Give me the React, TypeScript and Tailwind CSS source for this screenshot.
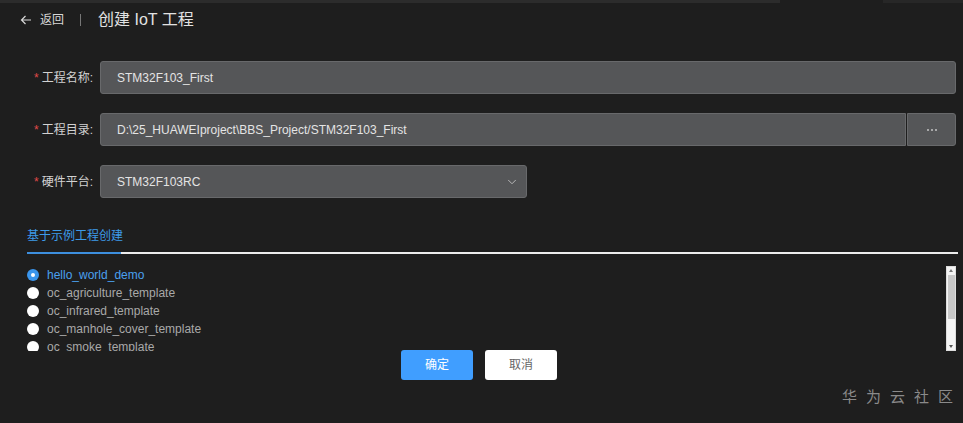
import { ChevronDown } from 'lucide-react'

const TEMPLATES = [
  'hello_world_demo',
  'oc_agriculture_template',
  'oc_infrared_template',
  'oc_manhole_cover_template',
  'oc_smoke_template',
]

const font = { fontFamily: '"Liberation Sans", "Noto Sans CJK SC", sans-serif' }

export default function App() {
  const selected = 'hello_world_demo'

  return (
    <div className="w-[963px] h-[423px] bg-[#1e1e1e] relative overflow-hidden text-[#d6d6d6]" style={font}>
      {/* top tab strip */}
      <div className="flex h-[3px]">
        <div className="w-[780px] bg-[#2c2c2c]" />
        <div className="flex-1" />
        <div className="w-[80px] bg-[#272727]" />
      </div>

      {/* header */}
      <div className="flex items-center h-[34px] pl-5">
        <button className="flex items-center gap-[8px] text-[12px] text-[#d8d8d8]">
          <svg width="12" height="12" viewBox="0 0 12 12" fill="none" stroke="currentColor" strokeWidth="1.2">
            <path d="M11 6H1.5M5.5 2L1.5 6l4 4" />
          </svg>
          返回
        </button>
        <div className="w-px h-[12px] bg-[#777] ml-[16px] mr-[17px]" />
        <h1 className="text-[16px] text-[#e2e2e2]">创建 IoT 工程</h1>
      </div>

      {/* form */}
      <div className="mt-[24px] pr-[7px] flex flex-col gap-[19px]">
        <Row label="工程名称:">
          <div className={box + ' flex-1'}>STM32F103_First</div>
        </Row>
        <Row label="工程目录:">
          <div className="flex-1 flex">
            <div className={box + ' flex-1 rounded-r-none'}>D:\25_HUAWEIproject\BBS_Project/STM32F103_First</div>
            <div className="w-[49px] ml-px h-[33px] bg-[#555658] border border-[#68696b] rounded-r-[3px] flex items-center justify-center gap-[2px]">
              <span className="w-[2px] h-[2px] rounded-full bg-[#c4c4c4]" />
              <span className="w-[2px] h-[2px] rounded-full bg-[#c4c4c4]" />
              <span className="w-[2px] h-[2px] rounded-full bg-[#c4c4c4]" />
            </div>
          </div>
        </Row>
        <Row label="硬件平台:">
          <div className={box + ' w-[427px] justify-between pr-[7px]'}>
            <span>STM32F103RC</span>
            <ChevronDown size={14} strokeWidth={1.6} className="text-[#bdbdbd]" />
          </div>
        </Row>
      </div>

      {/* tabs */}
      <div className="mt-[30px] ml-[27px] mr-[5px]">
        <div className="text-[12px] text-[#3d9be9] leading-[16px] pb-[8px]">基于示例工程创建</div>
        <div className="flex h-[2px]">
          <div className="w-[94px] bg-[#3d8fde]" />
          <div className="flex-1 bg-[#ececec]" />
        </div>
      </div>

      {/* template list */}
      <div className="flex ml-[27px] mr-[7px] mt-[12px] h-[85px]">
        <div className="flex-1 overflow-hidden">
          {TEMPLATES.map(t => {
            const on = t === selected
            return (
              <div key={t} className="flex items-center h-[18px] gap-[8px]">
                {on ? (
                  <span className="w-[12px] h-[12px] rounded-full bg-[#3a95ec] flex items-center justify-center">
                    <span className="w-[4px] h-[4px] rounded-full bg-white" />
                  </span>
                ) : (
                  <span className="w-[12px] h-[12px] rounded-full bg-white" />
                )}
                <span className={`text-[12px] ${on ? 'text-[#4aa0ee]' : 'text-[#a9a9a9]'}`}>{t}</span>
              </div>
            )
          })}
        </div>
        <div className="w-[10px] bg-[#f4f4f4] flex flex-col items-center py-[2px] border border-[#ddd]">
          <span className="w-0 h-0 border-l-[2px] border-r-[2px] border-b-[3px] border-l-transparent border-r-transparent border-b-[#777]" />
          <div className="w-[7px] h-[44px] bg-[#c8c8c8] mt-[3px]" />
          <div className="flex-1" />
          <span className="w-0 h-0 border-l-[2px] border-r-[2px] border-t-[3px] border-l-transparent border-r-transparent border-t-[#555]" />
        </div>
      </div>

      {/* actions */}
      <div className="flex justify-center gap-[12px] -mt-px pr-[5px]">
        <button className="w-[72px] h-[30px] rounded-[3px] bg-[#409eff] text-white text-[12px]">确定</button>
        <button className="w-[72px] h-[30px] rounded-[3px] bg-white text-[#666] text-[12px]">取消</button>
      </div>

      {/* watermark */}
      <div className="absolute right-[1px] bottom-[16px] text-[15px] text-[#8a8a8a] tracking-[9px]" style={{ fontFamily: '"Noto Sans CJK SC", sans-serif' }}>
        华为云社区
      </div>
    </div>
  )
}

const box = 'h-[33px] bg-[#555658] border border-[#68696b] rounded-[3px] flex items-center px-[16px] text-[12px] text-[#e4e4e4]'

function Row({ label, children }: { label: string; children: React.ReactNode }) {
  return (
    <div className="flex items-center">
      <label className="w-[100px] pr-[7px] text-right text-[12px] text-[#d2d2d2]">
        <span className="text-[#e04a4a] mr-[3px]">*</span>
        {label}
      </label>
      {children}
    </div>
  )
}
